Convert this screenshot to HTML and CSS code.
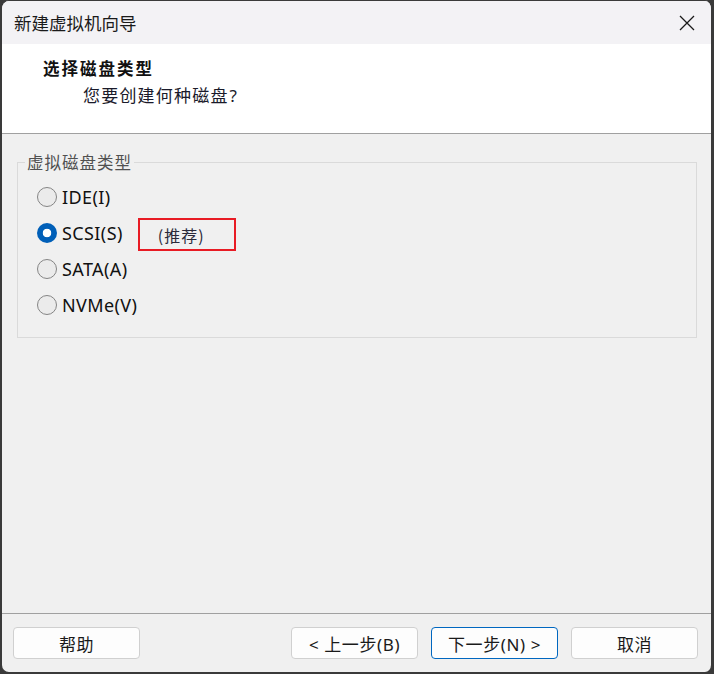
FILE: index.html
```html
<!DOCTYPE html>
<html lang="zh-CN">
<head>
<meta charset="utf-8">
<title>新建虚拟机向导</title>
<link rel="stylesheet" href="styles.css">
</head>
<body>
<div class="window">
  <div class="titlebar">
    <span class="title">新建虚拟机向导</span>
    <svg class="close" width="16" height="16" viewBox="0 0 16 16"><path d="M1 1 L15 15 M15 1 L1 15" stroke="#1a1a1a" stroke-width="1.3" fill="none"/></svg>
  </div>
  <div class="header">
    <div class="h1">选择磁盘类型</div>
    <div class="h2">您要创建何种磁盘<span class="q">?</span></div>
  </div>
  <div class="content">
    <fieldset class="group">
      <legend>虚拟磁盘类型</legend>
      <div class="row"><span class="radio"></span><span class="label">IDE(I)</span></div>
      <div class="row"><span class="radio checked"></span><span class="label">SCSI(S)</span><span class="rec">(推荐)</span></div>
      <div class="row"><span class="radio"></span><span class="label">SATA(A)</span></div>
      <div class="row"><span class="radio"></span><span class="label">NVMe(V)</span></div>
    </fieldset>
  </div>
  <div class="footer">
    <button class="btn">帮助</button>
    <div class="spacer"></div>
    <button class="btn">&lt; 上一步(B)</button>
    <button class="btn primary">下一步(N) &gt;</button>
    <button class="btn">取消</button>
  </div>
</div>
</body>
</html>
```
FILE: styles.css
```css
html, body {
  margin: 0;
  padding: 0;
  background: #3a3a3a;
}
body {
  width: 714px;
  height: 674px;
  overflow: hidden;
  font-family: "Noto Sans", "Noto Sans CJK SC", sans-serif;
  color: #1a1a1a;
}
.window {
  box-sizing: border-box;
  width: 714px;
  height: 674px;
  border-style: solid;
  border-color: #3a3a3a;
  border-width: 1px 3px 2px 2px;
  border-radius: 9px;
  background: #f0f0f0;
  overflow: hidden;
  display: flex;
  flex-direction: column;
}
.titlebar {
  height: 43px;
  flex: none;
  background: #f3f2f5;
  display: flex;
  align-items: center;
  padding: 0 16px 0 12px;
}
.title {
  font-family: "Noto Sans CJK SC", sans-serif;
  font-size: 17.5px;
  color: #1a1a1a;
  flex: 1;
}
.close {
  width: 16px;
  height: 16px;
  margin-top: 1px;
}
.header {
  flex: none;
  height: 77px;
  background: #ffffff;
  border-bottom: 1px solid #a0a0a0;
  padding: 12px 0 0 41px;
  font-family: "Noto Sans CJK SC", sans-serif;
}
.h1 {
  font-size: 16.5px;
  font-weight: bold;
  letter-spacing: 2px;
  line-height: 24px;
  color: #111;
}
.h2 {
  margin-top: 3px;
  padding-left: 40px;
  font-size: 17px;
  letter-spacing: 1.2px;
  line-height: 24px;
  color: #1a1a2a;
}
.h2 .q {
  font-family: "Noto Sans", sans-serif;
  letter-spacing: 0;
  margin-left: 1px;
}
.content {
  flex: 1;
  padding: 16px 14px 0 15px;
}
.group {
  margin: 0;
  border: 1px solid #dadada;
  padding: 5px 0 14px 19px;
}
.group legend {
  padding: 0 2px;
  margin-left: -12px;
  font-family: "Noto Sans CJK SC", sans-serif;
  font-size: 16.5px;
  line-height: 24px;
  color: #505050;
  letter-spacing: 1px;
}
.row {
  height: 36px;
  display: flex;
  align-items: center;
}
.radio {
  box-sizing: border-box;
  width: 20px;
  height: 20px;
  border-radius: 50%;
  border: 1px solid #858585;
  background: #ebebeb;
  margin-right: 5px;
  flex: none;
}
.radio.checked {
  border: none;
  background: radial-gradient(circle, #ffffff 0 4px, #005fb8 4.6px);
}
.label {
  font-size: 18px;
  letter-spacing: 0.4px;
  color: #111;
}
.rec {
  box-sizing: border-box;
  margin-left: 15px;
  margin-top: 3px;
  width: 98px;
  height: 33px;
  border: 2px solid #e81b24;
  padding-left: 18px;
  display: flex;
  align-items: center;
  font-family: "Noto Sans CJK SC", sans-serif;
  font-size: 16px;
  color: #2a2a3a;
  letter-spacing: 1px;
}
.footer {
  flex: none;
  height: 45px;
  border-top: 1px solid #a0a0a0;
  padding: 13px 13px 0 11px;
  display: flex;
  align-items: flex-start;
  gap: 13px;
}
.spacer {
  flex: 1;
}
.btn {
  box-sizing: border-box;
  width: 127px;
  height: 32px;
  border: 1px solid #d0d0d0;
  border-radius: 4px;
  background: #fdfdfd;
  font-family: "Noto Sans", "Noto Sans CJK SC", sans-serif;
  font-size: 17px;
  letter-spacing: 0.6px;
  color: #1a1a1a;
  padding: 0;
}
.btn.primary {
  border-color: #0067c0;
}
```
